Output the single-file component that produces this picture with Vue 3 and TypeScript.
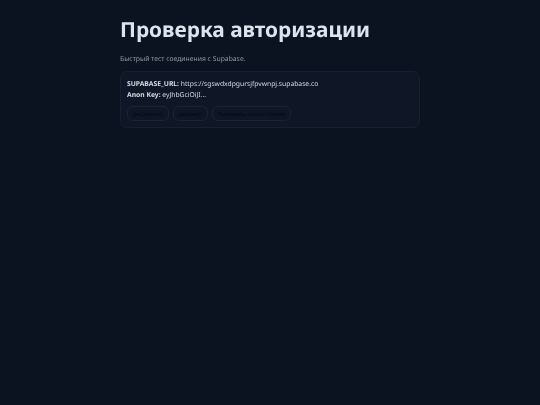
<script setup lang="ts">
const buttons: string[] = ['getSession()', 'getUser()', 'Проверить /auth/v1/health']
</script>

<template>
  <main class="page">
    <h1 class="title">Проверка авторизации</h1>
    <p class="lead">Быстрый тест соединения с Supabase.</p>
    <section class="card">
      <div class="line"><strong>SUPABASE_URL:</strong> https://sgswdxdpgursjfpvwnpj.supabase.co</div>
      <div class="line"><strong>Anon Key:</strong> eyJhbGciOiJI...</div>
      <div class="actions">
        <button v-for="b in buttons" :key="b" class="btn" type="button">{{ b }}</button>
      </div>
    </section>
  </main>
</template>

<style>
html, body { margin: 0; background: #0b1220; }
</style>

<style scoped>
.page {
  box-sizing: border-box;
  width: 540px;
  height: 405px;
  padding: 17px 120px 0;
  background: #0b1220;
  font-family: "Noto Sans", sans-serif;
  color: #d5dce6;
  text-rendering: geometricPrecision;
}
.title {
  margin: 0;
  font-size: 20.85px;
  line-height: 26px;
  font-weight: 700;
  color: #dde4ee;
  will-change: transform;
}
.lead {
  margin: 10px 0 0;
  font-size: 6.8px;
  line-height: 11px;
  color: #8f99a8;
  will-change: transform;
}
.card {
  box-sizing: border-box;
  height: 57px;
  margin-top: 7px;
  padding: 6px 6px;
  background: #0f1727;
  border: 1px solid #172031;
  border-radius: 7px;
}
.line {
  font-size: 6.75px;
  line-height: 11px;
  color: #d5dce6;
  will-change: transform;
}
.line strong { font-weight: 700; }
.actions {
  display: flex;
  gap: 4px;
  margin-top: 6px;
}
.btn {
  height: 15px;
  padding: 0 5px;
  background: #0f1727;
  border: 1px solid #1b2434;
  border-radius: 6px;
  font-family: inherit;
  font-size: 5.25px;
  color: #05080f;
}
</style>
